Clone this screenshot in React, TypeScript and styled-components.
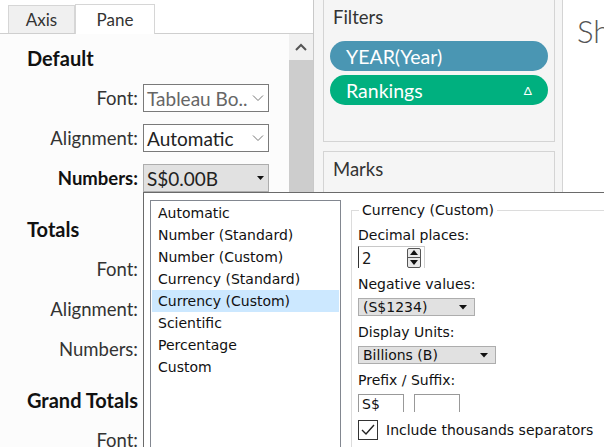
import React from 'react';
import styled, { createGlobalStyle } from 'styled-components';

const GlobalStyle = createGlobalStyle`
  html, body {
    margin: 0;
    padding: 0;
    background: #fff;
    overflow: hidden;
  }
`;

const Screen = styled.div`
  position: relative;
  display: flex;
  width: 604px;
  height: 447px;
  overflow: hidden;
  font-family: Lato, 'Open Sans', sans-serif;
  color: #2b2b2b;
`;

/* ---------- left format pane ---------- */

const LeftPanel = styled.div`
  flex: 0 0 313px;
  display: flex;
  flex-direction: column;
  border-right: 1px solid #c9c9c9;
  background: #fcfcfc;
`;

const TabBar = styled.div`
  height: 33px;
  display: flex;
  align-items: flex-end;
  padding-left: 8px;
  background: #fff;
  border-bottom: 1px solid #cfcfcf;
`;

const Tab = styled.div<{ $active?: boolean }>`
  width: ${(p) => (p.$active ? 80 : 67)}px;
  height: ${(p) => (p.$active ? 30 : 28)}px;
  margin-bottom: ${(p) => (p.$active ? -1 : 0)}px;
  display: flex;
  align-items: center;
  justify-content: center;
  font-size: 17px;
  color: #333;
  background: ${(p) => (p.$active ? '#fff' : '#f0f0f0')};
  border: 1px solid #d6d6d6;
  border-bottom: none;
  box-sizing: border-box;
`;

const PaneBody = styled.div`
  flex: 1;
  display: flex;
  min-height: 0;
`;

const Content = styled.div`
  flex: 1;
  padding: 12px 0 0 27px;
  display: flex;
  flex-direction: column;
  gap: 25px;
`;

const Section = styled.div`
  display: flex;
  flex-direction: column;
`;

const Heading = styled.div`
  font-size: 20px;
  font-weight: 700;
  line-height: 24px;
  color: #111;
  margin-bottom: 14px;
  white-space: nowrap;
`;

const Rows = styled.div`
  display: flex;
  flex-direction: column;
  gap: 12px;
`;

const Row = styled.div`
  display: flex;
  align-items: center;
  height: 28px;
  gap: 5px;
`;

const Label = styled.div<{ $bold?: boolean }>`
  width: 111px;
  text-align: right;
  font-size: 18.5px;
  font-weight: ${(p) => (p.$bold ? 700 : 400)};
  color: ${(p) => (p.$bold ? '#111' : '#333')};
  white-space: nowrap;
`;

const Select = styled.div<{ $grey?: boolean; $muted?: boolean }>`
  width: 126px;
  height: 28px;
  box-sizing: border-box;
  display: flex;
  align-items: center;
  justify-content: space-between;
  padding: 0 4px 0 3px;
  font-size: 19px;
  white-space: nowrap;
  color: ${(p) => (p.$muted ? '#666' : '#222')};
  background: ${(p) => (p.$grey ? '#e1e1e1' : '#fff')};
  border: 1px solid ${(p) => (p.$grey ? '#adadad' : '#7a7a7a')};
`;

const Scrollbar = styled.div`
  width: 24px;
  display: flex;
  flex-direction: column;
  background: #f0f0f0;
`;

const ScrollArrow = styled.div`
  height: 26px;
  display: flex;
  align-items: center;
  justify-content: center;
`;

const ScrollThumb = styled.div`
  flex: 1;
  background: #cdcdcd;
`;

/* ---------- middle shelves ---------- */

const Shelves = styled.div`
  flex: 0 0 249px;
  padding: 0 7px 0 9px;
  box-sizing: border-box;
  background: #f5f5f5;
  border-right: 1px solid #d4d4d4;
  display: flex;
  flex-direction: column;
  gap: 9px;
`;

const Card = styled.div<{ $height?: number }>`
  ${(p) => (p.$height ? `height: ${p.$height}px;` : 'flex: 1;')}
  margin-top: ${(p) => (p.$height ? -1 : 0)}px;
  border: 1px solid #d4d4d4;
  background: #f5f5f5;
  padding: 0 6px;
  display: flex;
  flex-direction: column;
`;

const CardTitle = styled.div`
  font-size: 18.5px;
  color: #333;
  line-height: 20px;
  padding: 7px 0 0 3px;
  margin-bottom: 14px;
`;

const Pill = styled.div<{ $color: string }>`
  height: 30px;
  border-radius: 15px;
  background: ${(p) => p.$color};
  color: #fff;
  font-size: 19.5px;
  display: flex;
  align-items: center;
  justify-content: space-between;
  padding: 0 16px;
  margin-bottom: 4px;
`;

const Delta = styled.span`
  font-size: 12px;
`;

const Canvas = styled.div`
  flex: 1;
  min-width: 0;
  overflow: hidden;
  background: #fff;
  padding: 12px 0 0 14px;
  font-size: 31px;
  font-weight: 300;
  color: #555;
  white-space: nowrap;
`;

/* ---------- format popup ---------- */

const Popup = styled.div`
  position: absolute;
  left: 143px;
  top: 192px;
  width: 480px;
  height: 270px;
  box-sizing: border-box;
  background: #fff;
  border-top: 1px solid #6a6a6a;
  border-left: 1px solid #6a6a6a;
  display: flex;
  gap: 10px;
  padding: 7px 0 0 6px;
  font-family: 'DejaVu Sans', Tahoma, 'Liberation Sans', sans-serif;
  font-size: 14px;
  color: #111;
`;

const TypeList = styled.div`
  flex: 0 0 191px;
  box-sizing: border-box;
  border: 1px solid #828790;
  padding: 1px;
`;

const TypeItem = styled.div<{ $selected?: boolean }>`
  height: 22px;
  line-height: 22px;
  padding-left: 6px;
  white-space: nowrap;
  background: ${(p) => (p.$selected ? '#cce8ff' : 'transparent')};
`;

const Group = styled.div`
  position: relative;
  flex: 1;
  margin-top: 10px;
  border: 1px solid #dcdcdc;
  padding: 15px 0 0 6px;
`;

const Legend = styled.div`
  position: absolute;
  top: -10px;
  left: 7px;
  padding: 0 3px;
  background: #fff;
  line-height: 18px;
  white-space: nowrap;
`;

const FieldLabel = styled.div`
  height: 18px;
  line-height: 18px;
  margin-bottom: 5px;
  white-space: nowrap;
`;

const Field = styled.div`
  margin-bottom: 7px;
`;

const Spinner = styled.div`
  display: flex;
  align-items: center;
  width: 67px;
  height: 22px;
  margin-top: -3px;
  box-sizing: border-box;
  border-top: 1px solid #c8c8c8;
  border-left: 1px solid #333;
  border-right: 1px solid #d0d0d0;
`;

const SpinValue = styled.div`
  flex: 1;
  padding: 2px 0 0 3px;
  font-size: 15px;
  color: #1a1a1a;
`;

const SpinButton = styled.div`
  flex: 0 0 14px;
  height: 20px;
  box-sizing: border-box;
  border: 1px solid #555;
  border-radius: 2px;
  background: #e9e9e9;
  display: flex;
  flex-direction: column;
  margin-right: 3px;
`;

const SpinHalf = styled.div<{ $down?: boolean }>`
  flex: 1;
  display: flex;
  align-items: center;
  justify-content: center;
  ${(p) => (p.$down ? 'border-top: 1px solid #555;' : '')}
`;

const Combo = styled.div<{ $width: number }>`
  width: ${(p) => p.$width}px;
  height: 18px;
  box-sizing: border-box;
  background: #e1e1e1;
  border: 1px solid #adadad;
  display: flex;
  align-items: center;
  justify-content: space-between;
  padding: 0 7px 0 4px;
  line-height: 16px;
  white-space: nowrap;
`;

const Affixes = styled.div`
  display: flex;
  gap: 10px;
`;

const AffixBox = styled.div`
  width: 46px;
  height: 18px;
  box-sizing: border-box;
  border: 1px solid #999;
  border-bottom: none;
  padding: 1px 0 0 3px;
  line-height: 17px;
`;

const CheckRow = styled.div`
  display: flex;
  align-items: center;
  gap: 8px;
  margin-top: 8px;
  white-space: nowrap;
`;

const CheckBox = styled.div`
  flex: 0 0 20px;
  height: 20px;
  box-sizing: border-box;
  border: 1px solid #333;
  display: flex;
  align-items: center;
  justify-content: center;
  background: #fff;
`;

const Caret = ({ size = 7 }: { size?: number }) => (
  <svg width={size} height={size / 2 + 1} viewBox="0 0 8 5">
    <path d="M0 0h8L4 4.5z" fill="#111" />
  </svg>
);

const Chevron = () => (
  <svg width="12" height="8" viewBox="0 0 12 8">
    <path d="M1 1.5l5 5 5-5" fill="none" stroke="#777" strokeWidth="1" />
  </svg>
);

const formatRows = (withControls: boolean) => (
  <Rows>
    <Row>
      <Label>Font:</Label>
      {withControls && (
        <Select $muted>
          <span>Tableau Bo..</span>
          <Chevron />
        </Select>
      )}
    </Row>
    <Row>
      <Label>Alignment:</Label>
      {withControls && (
        <Select>
          <span>Automatic</span>
          <Chevron />
        </Select>
      )}
    </Row>
    <Row>
      <Label $bold={withControls}>Numbers:</Label>
      {withControls && (
        <Select $grey>
          <span>S$0.00B</span>
          <Caret />
        </Select>
      )}
    </Row>
  </Rows>
);

const numberTypes = [
  'Automatic',
  'Number (Standard)',
  'Number (Custom)',
  'Currency (Standard)',
  'Currency (Custom)',
  'Scientific',
  'Percentage',
  'Custom',
];

export default function App() {
  return (
    <>
      <GlobalStyle />
      <Screen>
        <LeftPanel>
          <TabBar>
            <Tab>Axis</Tab>
            <Tab $active>Pane</Tab>
          </TabBar>
          <PaneBody>
            <Content>
              <Section>
                <Heading>Default</Heading>
                {formatRows(true)}
              </Section>
              <Section>
                <Heading>Totals</Heading>
                {formatRows(false)}
              </Section>
              <Section>
                <Heading>Grand Totals</Heading>
                <Rows>
                  <Row>
                    <Label>Font:</Label>
                  </Row>
                </Rows>
              </Section>
            </Content>
            <Scrollbar>
              <ScrollArrow>
                <svg width="12" height="8" viewBox="0 0 12 8">
                  <path d="M1 7l5-5 5 5" fill="none" stroke="#555" strokeWidth="2" />
                </svg>
              </ScrollArrow>
              <ScrollThumb />
            </Scrollbar>
          </PaneBody>
        </LeftPanel>

        <Shelves>
          <Card $height={141}>
            <CardTitle>Filters</CardTitle>
            <Pill $color="#4a96b3">YEAR(Year)</Pill>
            <Pill $color="#00b07f">
              <span>Rankings</span>
              <Delta>Δ</Delta>
            </Pill>
          </Card>
          <Card>
            <CardTitle>Marks</CardTitle>
          </Card>
        </Shelves>

        <Canvas>Sh</Canvas>

        <Popup>
          <TypeList>
            {numberTypes.map((t) => (
              <TypeItem key={t} $selected={t === 'Currency (Custom)'}>
                {t}
              </TypeItem>
            ))}
          </TypeList>
          <Group>
            <Legend>Currency (Custom)</Legend>
            <Field>
              <FieldLabel>Decimal places:</FieldLabel>
              <Spinner>
                <SpinValue>2</SpinValue>
                <SpinButton>
                  <SpinHalf>
                    <svg width="8" height="5" viewBox="0 0 8 5">
                      <path d="M0 5h8L4 0z" fill="#111" />
                    </svg>
                  </SpinHalf>
                  <SpinHalf $down>
                    <svg width="8" height="5" viewBox="0 0 8 5">
                      <path d="M0 0h8L4 5z" fill="#111" />
                    </svg>
                  </SpinHalf>
                </SpinButton>
              </Spinner>
            </Field>
            <Field>
              <FieldLabel>Negative values:</FieldLabel>
              <Combo $width={117}>
                <span>(S$1234)</span>
                <Caret size={8} />
              </Combo>
            </Field>
            <Field>
              <FieldLabel>Display Units:</FieldLabel>
              <Combo $width={138}>
                <span>Billions (B)</span>
                <Caret size={8} />
              </Combo>
            </Field>
            <Field>
              <FieldLabel>Prefix / Suffix:</FieldLabel>
              <Affixes>
                <AffixBox>S$</AffixBox>
                <AffixBox />
              </Affixes>
            </Field>
            <CheckRow>
              <CheckBox>
                <svg width="14" height="12" viewBox="0 0 14 12">
                  <path d="M1 6l4 4 8-9" fill="none" stroke="#222" strokeWidth="1.4" />
                </svg>
              </CheckBox>
              <span>Include thousands separators</span>
            </CheckRow>
          </Group>
        </Popup>
      </Screen>
    </>
  );
}
